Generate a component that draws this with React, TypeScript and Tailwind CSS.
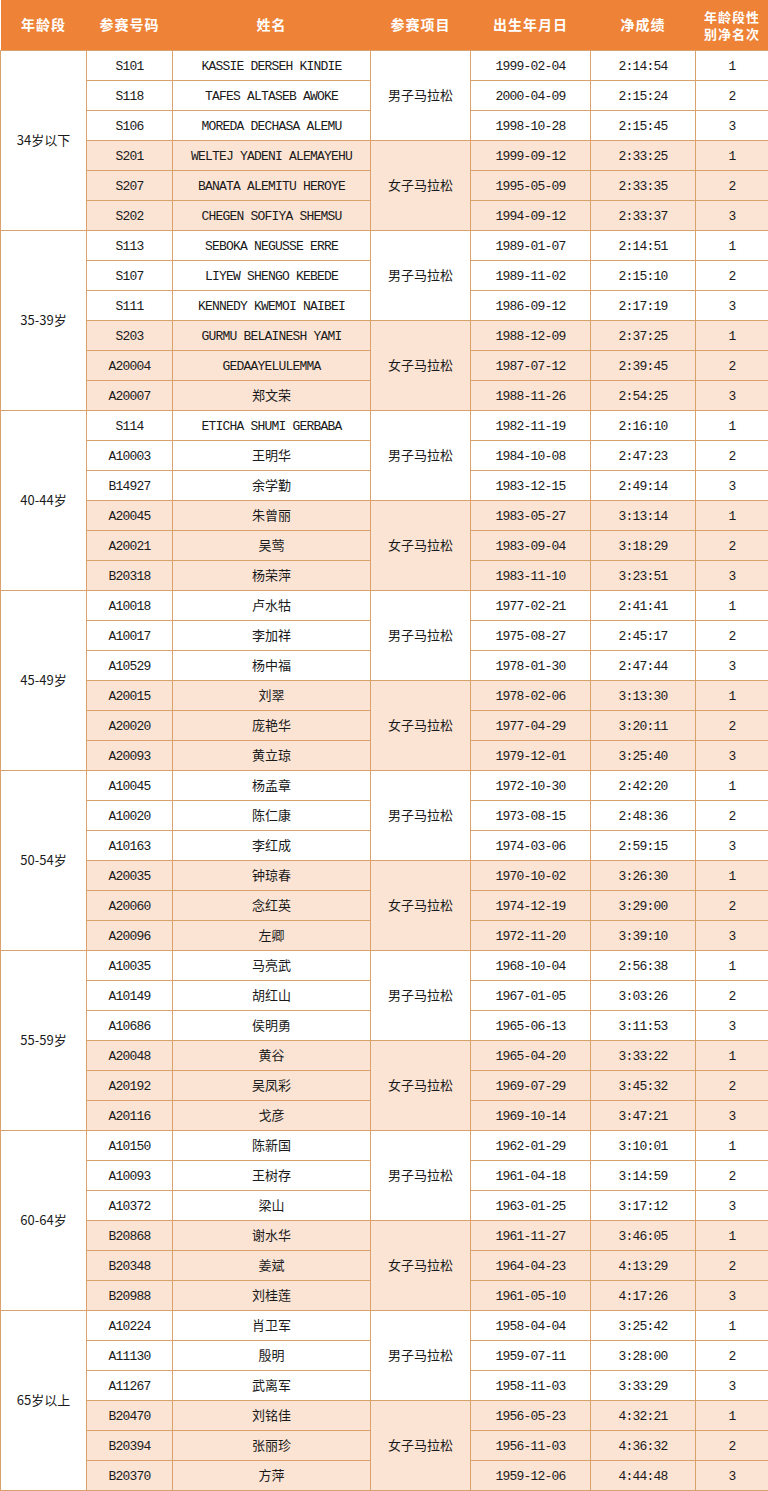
import React from "react";

type Row = [string, string, string, string, string];

const groups: { age: string; men: Row[]; women: Row[] }[] = [
  {
    age: "34岁以下",
    men: [
      ["S101", "KASSIE DERSEH KINDIE", "1999-02-04", "2:14:54", "1"],
      ["S118", "TAFES ALTASEB AWOKE", "2000-04-09", "2:15:24", "2"],
      ["S106", "MOREDA DECHASA ALEMU", "1998-10-28", "2:15:45", "3"],
    ],
    women: [
      ["S201", "WELTEJ YADENI ALEMAYEHU", "1999-09-12", "2:33:25", "1"],
      ["S207", "BANATA ALEMITU HEROYE", "1995-05-09", "2:33:35", "2"],
      ["S202", "CHEGEN SOFIYA SHEMSU", "1994-09-12", "2:33:37", "3"],
    ],
  },
  {
    age: "35-39岁",
    men: [
      ["S113", "SEBOKA NEGUSSE ERRE", "1989-01-07", "2:14:51", "1"],
      ["S107", "LIYEW SHENGO KEBEDE", "1989-11-02", "2:15:10", "2"],
      ["S111", "KENNEDY KWEMOI NAIBEI", "1986-09-12", "2:17:19", "3"],
    ],
    women: [
      ["S203", "GURMU BELAINESH YAMI", "1988-12-09", "2:37:25", "1"],
      ["A20004", "GEDAAYELULEMMA", "1987-07-12", "2:39:45", "2"],
      ["A20007", "郑文荣", "1988-11-26", "2:54:25", "3"],
    ],
  },
  {
    age: "40-44岁",
    men: [
      ["S114", "ETICHA SHUMI GERBABA", "1982-11-19", "2:16:10", "1"],
      ["A10003", "王明华", "1984-10-08", "2:47:23", "2"],
      ["B14927", "余学勤", "1983-12-15", "2:49:14", "3"],
    ],
    women: [
      ["A20045", "朱曾丽", "1983-05-27", "3:13:14", "1"],
      ["A20021", "吴莺", "1983-09-04", "3:18:29", "2"],
      ["B20318", "杨荣萍", "1983-11-10", "3:23:51", "3"],
    ],
  },
  {
    age: "45-49岁",
    men: [
      ["A10018", "卢水牯", "1977-02-21", "2:41:41", "1"],
      ["A10017", "李加祥", "1975-08-27", "2:45:17", "2"],
      ["A10529", "杨中福", "1978-01-30", "2:47:44", "3"],
    ],
    women: [
      ["A20015", "刘翠", "1978-02-06", "3:13:30", "1"],
      ["A20020", "庞艳华", "1977-04-29", "3:20:11", "2"],
      ["A20093", "黄立琼", "1979-12-01", "3:25:40", "3"],
    ],
  },
  {
    age: "50-54岁",
    men: [
      ["A10045", "杨孟章", "1972-10-30", "2:42:20", "1"],
      ["A10020", "陈仁康", "1973-08-15", "2:48:36", "2"],
      ["A10163", "李红成", "1974-03-06", "2:59:15", "3"],
    ],
    women: [
      ["A20035", "钟琼春", "1970-10-02", "3:26:30", "1"],
      ["A20060", "念红英", "1974-12-19", "3:29:00", "2"],
      ["A20096", "左卿", "1972-11-20", "3:39:10", "3"],
    ],
  },
  {
    age: "55-59岁",
    men: [
      ["A10035", "马亮武", "1968-10-04", "2:56:38", "1"],
      ["A10149", "胡红山", "1967-01-05", "3:03:26", "2"],
      ["A10686", "侯明勇", "1965-06-13", "3:11:53", "3"],
    ],
    women: [
      ["A20048", "黄谷", "1965-04-20", "3:33:22", "1"],
      ["A20192", "吴凤彩", "1969-07-29", "3:45:32", "2"],
      ["A20116", "戈彦", "1969-10-14", "3:47:21", "3"],
    ],
  },
  {
    age: "60-64岁",
    men: [
      ["A10150", "陈新国", "1962-01-29", "3:10:01", "1"],
      ["A10093", "王树存", "1961-04-18", "3:14:59", "2"],
      ["A10372", "梁山", "1963-01-25", "3:17:12", "3"],
    ],
    women: [
      ["B20868", "谢水华", "1961-11-27", "3:46:05", "1"],
      ["B20348", "姜斌", "1964-04-23", "4:13:29", "2"],
      ["B20988", "刘桂莲", "1961-05-10", "4:17:26", "3"],
    ],
  },
  {
    age: "65岁以上",
    men: [
      ["A10224", "肖卫军", "1958-04-04", "3:25:42", "1"],
      ["A11130", "殷明", "1959-07-11", "3:28:00", "2"],
      ["A11267", "武离军", "1958-11-03", "3:33:29", "3"],
    ],
    women: [
      ["B20470", "刘铭佳", "1956-05-23", "4:32:21", "1"],
      ["B20394", "张丽珍", "1956-11-03", "4:36:32", "2"],
      ["B20370", "方萍", "1959-12-06", "4:44:48", "3"],
    ],
  },
];

const base =
  "border border-[#d9a26c] text-center align-middle p-0 text-[#1a1a1a] whitespace-nowrap";
const monoCls = `${base} text-[13px] tracking-[-0.8px] pt-[3px] leading-[26px]`;
const sansCls = `${base} text-[13px] leading-[28px]`;
const mono = { fontFamily: "'Liberation Mono', 'Noto Sans CJK SC', monospace" };
const sans = { fontFamily: "'Noto Sans CJK SC', 'Noto Sans', sans-serif" };

function isLatin(s: string) {
  return /^[\x00-\x7f]+$/.test(s);
}

export default function App() {
  return (
    <div className="w-[768px] bg-white">
      <table className="table-fixed border-collapse w-[768px]">
        <colgroup>
          <col className="w-[86px]" />
          <col className="w-[86px]" />
          <col className="w-[198px]" />
          <col className="w-[100px]" />
          <col className="w-[120px]" />
          <col className="w-[105px]" />
          <col className="w-[73px]" />
        </colgroup>
        <thead>
          <tr className="h-[50px] bg-[#ee8236]">
            {["年龄段", "参赛号码", "姓名", "参赛项目", "出生年月日", "净成绩"].map((h) => (
              <th
                key={h}
                className="p-0 text-center align-middle text-white font-bold text-[14px] tracking-[1px]"
                style={sans}
              >
                {h}
              </th>
            ))}
            <th
              className="p-0 text-center align-middle text-white font-bold text-[13px] leading-[17px] tracking-[1px]"
              style={sans}
            >
              年龄段性
              <br />
              别净名次
            </th>
          </tr>
        </thead>
        <tbody>
          {groups.map((g) =>
            [...g.men.map((r) => ({ r, w: false })), ...g.women.map((r) => ({ r, w: true }))].map(
              ({ r, w }, i) => {
                const bg = w ? "bg-[#fce4d5]" : "bg-white";
                const latinName = isLatin(r[1]);
                return (
                  <tr key={g.age + i} className="h-[30px]">
                    {i === 0 && (
                      <td rowSpan={6} className={`${sansCls} bg-white`} style={sans}>
                        {g.age}
                      </td>
                    )}
                    <td className={`${monoCls} ${bg}`} style={mono}>
                      {r[0]}
                    </td>
                    <td
                      className={`${latinName ? monoCls : sansCls} ${bg}`}
                      style={latinName ? mono : sans}
                    >
                      {r[1]}
                    </td>
                    {(i === 0 || i === 3) && (
                      <td rowSpan={3} className={`${sansCls} ${bg}`} style={sans}>
                        {w ? "女子马拉松" : "男子马拉松"}
                      </td>
                    )}
                    <td className={`${monoCls} ${bg}`} style={mono}>
                      {r[2]}
                    </td>
                    <td className={`${monoCls} ${bg}`} style={mono}>
                      {r[3]}
                    </td>
                    <td className={`${monoCls} ${bg}`} style={mono}>
                      {r[4]}
                    </td>
                  </tr>
                );
              }
            )
          )}
        </tbody>
      </table>
    </div>
  );
}
